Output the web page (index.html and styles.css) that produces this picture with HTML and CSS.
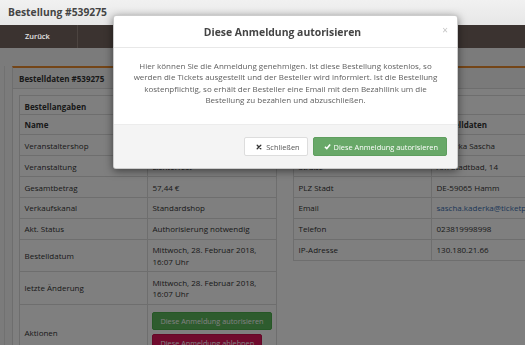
FILE: index.html
```html
<!DOCTYPE html>
<html lang="de">
<head>
<meta charset="utf-8">
<title>Bestellung #539275</title>
<link rel="stylesheet" href="styles.css">
</head>
<body>
<header class="topbar">
  <h1 class="page-title">Bestellung #539275</h1>
</header>
<nav class="navbar">
  <a class="nav-item" href="#">Zurück</a>
</nav>

<main class="content">
  <div class="wrap">
    <section class="panel">
      <div class="panel-heading">Bestelldaten #539275</div>
      <div class="panel-body">
        <div class="col col-left">
          <table class="tbl tbl-left">
            <tr class="caption-row"><th colspan="2">Bestellangaben</th></tr>
            <tr class="head-row"><th>Name</th><th>Bestelldaten</th></tr>
            <tr><td>Veranstaltershop</td><td>Ticketpay Shop</td></tr>
            <tr><td>Veranstaltung</td><td>Lichterfest</td></tr>
            <tr><td>Gesamtbetrag</td><td>57,44 €</td></tr>
            <tr><td>Verkaufskanal</td><td>Standardshop</td></tr>
            <tr><td>Akt. Status</td><td>Authorisierung notwendig</td></tr>
            <tr><td>Bestelldatum</td><td>Mittwoch, 28. Februar 2018,<br>16:07 Uhr</td></tr>
            <tr><td>letzte Änderung</td><td>Mittwoch, 28. Februar 2018,<br>16:07 Uhr</td></tr>
            <tr class="actions-row"><td>Aktionen</td><td>
              <a class="btn-sm btn-green" href="#">Diese Anmeldung autorisieren</a>
              <a class="btn-sm btn-red" href="#">Diese Anmeldung ablehnen</a>
            </td></tr>
          </table>
        </div>
        <div class="col col-right">
          <table class="tbl tbl-right">
            <tr class="caption-row"><th colspan="2">Bestellerangaben</th></tr>
            <tr class="head-row"><th>Name</th><th>Bestelldaten</th></tr>
            <tr><td>Name</td><td>Kaderka Sascha</td></tr>
            <tr><td>Straße</td><td>Am Stadtbad, 14</td></tr>
            <tr><td>PLZ Stadt</td><td>DE-59065 Hamm</td></tr>
            <tr><td>Email</td><td><a class="link" href="#">sascha.kaderka@ticketpay.de</a></td></tr>
            <tr><td>Telefon</td><td>023819998998</td></tr>
            <tr><td>IP-Adresse</td><td>130.180.21.66</td></tr>
          </table>
        </div>
      </div>
    </section>
  </div>
</main>

<div class="backdrop"></div>

<div class="modal" role="dialog">
  <div class="modal-header">
    <h4 class="modal-title">Diese Anmeldung autorisieren</h4>
    <span class="close">×</span>
  </div>
  <div class="modal-body">
    <p>Hier können Sie die Anmeldung genehmigen. Ist diese Bestellung kostenlos, so<br>werden die Tickets ausgestellt und der Besteller wird informiert. Ist die Bestellung<br>kostenpflichtig, so erhält der Besteller eine Email mit dem Bezahllink um die<br>Bestellung zu bezahlen und abzuschließen.</p>
  </div>
  <div class="modal-footer">
    <button class="btn btn-default"><svg class="ico ico-x" viewBox="0 0 10 10"><path d="M2 2 L8 8 M8 2 L2 8" stroke="#333" stroke-width="2.2" stroke-linecap="round"/></svg>Schließen</button>
    <button class="btn btn-success"><svg class="ico ico-check" viewBox="0 0 10 10"><path d="M1.3 5.3 L4 8 L8.8 2.2" fill="none" stroke="#fff" stroke-width="2.2" stroke-linejoin="round"/></svg>Diese Anmeldung autorisieren</button>
  </div>
</div>
</body>
</html>
```

FILE: styles.css
```css
* { box-sizing: border-box; }
html, body {
  margin: 0;
  padding: 0;
  width: 525px;
  height: 345px;
  overflow: hidden;
}
body {
  font-family: "Open Sans", "Liberation Sans", sans-serif;
  font-size: 8px;
  line-height: 11.4px;
  color: #333;
  background: #f7f7f7;
}

.topbar {
  position: relative;
  z-index: 20;
  height: 25px;
  background: linear-gradient(#f1f1f1, #e7e7e7);
  padding: 0 8px;
  display: flex;
  align-items: center;
}
.page-title {
  margin: 0;
  font-size: 10.3px;
  font-weight: 700;
  color: #444;
  line-height: 14px;
  padding-bottom: 1px;
}

.navbar {
  position: relative;
  z-index: 20;
  height: 23px;
  background: #3b3330;
  display: flex;
}
.nav-item {
  display: flex;
  align-items: center;
  width: 78px;
  padding-left: 25px;
  border-right: 1px solid #4c4440;
  color: #e6e6e6;
  font-weight: 600;
  font-size: 7.4px;
  text-decoration: none;
}

.content {
  padding: 18px 0 0 4px;
}
.wrap {
  border-left: 1px solid #e2e2e2;
  padding-left: 7px;
  height: 300px;
}
.panel {
  width: 560px;
  background: #fff;
  border: 1px solid #ddd;
  border-top: 2px solid #e98b2e;
}
.panel-heading {
  background: #f5f5f5;
  border-bottom: 1px solid #ddd;
  padding: 4.5px 6px;
  font-weight: 700;
  color: #333;
}
.panel-body {
  display: flex;
  gap: 16px;
  padding: 6px;
}
.col-left { width: 258px; flex: none; }
.col-right { width: 270px; flex: none; }

.tbl {
  width: 100%;
  border-collapse: collapse;
  border: 1px solid #ddd;
}
.tbl th, .tbl td {
  border: 1px solid #ddd;
  padding: 4.25px 4.5px;
  text-align: left;
  vertical-align: middle;
  line-height: 11.4px;
}
.tbl th { font-weight: 700; }
.tbl-left tr > :first-child { width: 128px; }
.tbl-right tr > :first-child { width: 138px; }
.caption-row th { padding-bottom: 1.5px; }
.link { color: #3a6fb0; text-decoration: none; }

.actions-row td { vertical-align: middle; }
.actions-row td:last-child { padding-top: 7px; }
.btn-sm {
  display: block;
  width: max-content;
  color: #fff;
  text-decoration: none;
  font-size: 7.3px;
  line-height: 10px;
  padding: 3px 7px;
  border-radius: 2px;
  margin-bottom: 4px;
}
.btn-green { background: #5cb85c; border: 1px solid #4cae4c; }
.btn-red { background: #e0145a; border: 1px solid #c9104e; }

.backdrop {
  position: fixed;
  inset: 0;
  z-index: 10;
  background: rgba(0, 0, 0, 0.5);
}

.modal {
  position: absolute;
  z-index: 30;
  top: 15px;
  left: 113px;
  width: 345px;
  background: #fff;
  border: 1px solid rgba(0, 0, 0, 0.2);
  border-radius: 3px;
  box-shadow: 0 2px 8px rgba(0, 0, 0, 0.5);
  overflow: hidden;
}
.modal-header {
  position: relative;
  height: 32px;
  border-bottom: 1px solid #e8e8e8;
  display: flex;
  align-items: center;
  justify-content: center;
}
.modal-title {
  margin: 0;
  font-size: 10.4px;
  font-weight: 700;
  color: #444;
  line-height: 14px;
  padding-right: 6px;
}
.close {
  position: absolute;
  right: 9px;
  top: 9px;
  font-size: 10px;
  line-height: 10px;
  color: #c4c4c4;
}
.modal-body {
  padding: 12px 8px 19px;
  text-align: center;
  color: #606060;
}
.modal-body p {
  margin: 0;
  white-space: nowrap;
  line-height: 11.3px;
}
.modal-footer {
  background: #f4f4f4;
  border-top: 1px solid #ececec;
  padding: 12px 10px 12px;
  display: flex;
  justify-content: flex-end;
  gap: 5px;
}
.btn {
  display: flex;
  align-items: center;
  height: 19px;
  font-family: "Open Sans", "Liberation Sans", sans-serif;
  font-size: 7.4px;
  border-radius: 2px;
  cursor: pointer;
}
.btn-default {
  background: #fff;
  border: 1px solid #ddd;
  color: #555;
  padding: 0 7px 0 11px;
}
.btn-success {
  background: #68a868;
  border: 1px solid #5f9e5f;
  color: #fff;
  padding: 0 8px 0 10px;
}
.ico {
  width: 6px;
  height: 6px;
  margin-right: 4px;
  flex: none;
}
.ico-check { width: 7px; height: 7px; margin-right: 3px; }
```
